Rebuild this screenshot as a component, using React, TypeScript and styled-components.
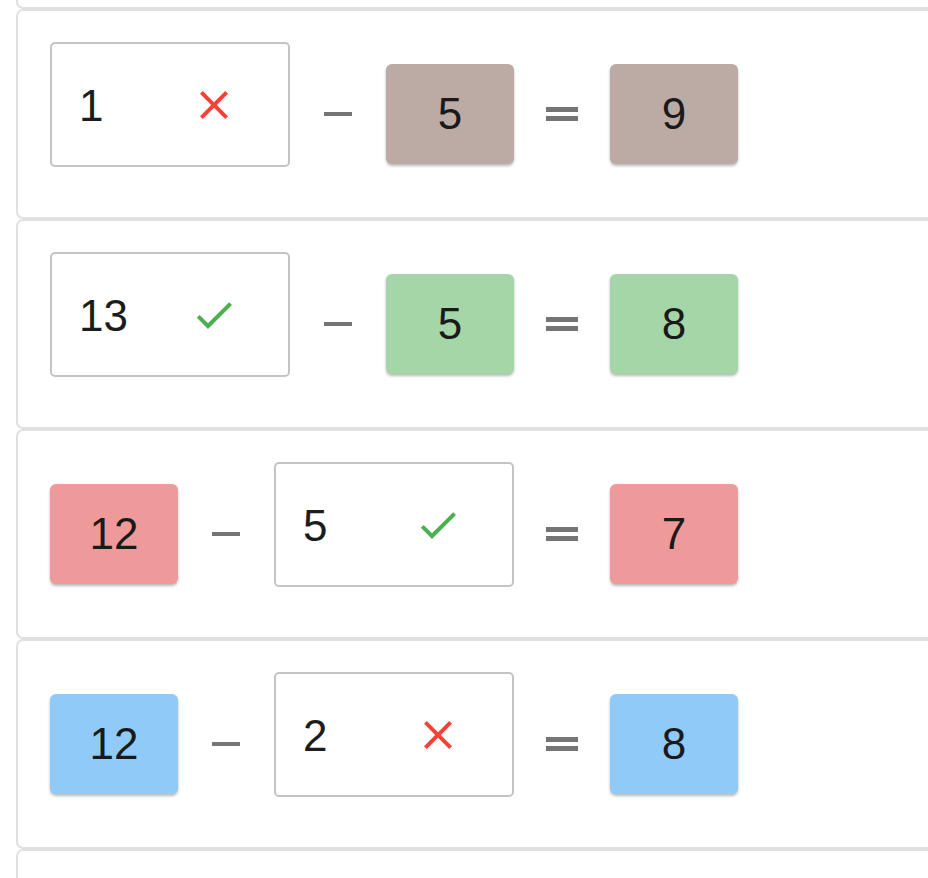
import React from "react";
import styled, { createGlobalStyle } from "styled-components";

const Global = createGlobalStyle`
  html, body {
    margin: 0;
    padding: 0;
    background: #ffffff;
    overflow: hidden;
    font-family: "Liberation Sans", Arial, sans-serif;
  }
`;

const List = styled.div`
  margin-top: -201px;
  margin-left: 16px;
  width: 960px;
  display: flex;
  flex-direction: column;
`;

const Card = styled.div`
  box-sizing: border-box;
  height: 210px;
  border: 2px solid #e0e0e0;
  border-radius: 7px;
  background: #fff;
  display: flex;
  align-items: center;
  padding-left: 32px;
`;

const Field = styled.div`
  box-sizing: border-box;
  width: 240px;
  height: 125px;
  margin-bottom: 19px;
  border: 2px solid #c4c4c4;
  border-radius: 5px;
  padding: 0 24px 0 27px;
  display: flex;
  align-items: center;
`;

const FieldText = styled.span`
  width: 111px;
  font-size: 44px;
  line-height: 1;
  padding-top: 3px;
  color: #1c1c1c;
`;

const NumberBox = styled.div<{ $bg: string }>`
  width: 128px;
  height: 100px;
  border-radius: 6px;
  background: ${(p) => p.$bg};
  box-shadow: 0 2px 3px rgba(0, 0, 0, 0.28);
  display: flex;
  align-items: center;
  justify-content: center;
  font-size: 44px;
  color: #1a1a1a;
`;

const OpSlot = styled.div`
  width: 96px;
  display: flex;
  align-items: center;
  justify-content: center;
`;

const Minus = styled.span`
  width: 28px;
  height: 4px;
  background: #757575;
`;

const Equals = styled.span`
  width: 32px;
  height: 14px;
  box-sizing: border-box;
  border-top: 5px solid #757575;
  border-bottom: 5px solid #757575;
`;

const CloseIcon = () => (
  <svg width="48" height="48" viewBox="0 0 24 24" fill="#f44336">
    <path d="M19 6.41 17.59 5 12 10.59 6.41 5 5 6.41 10.59 12 5 17.59 6.41 19 12 13.41 17.59 19 19 17.59 13.41 12z" />
  </svg>
);

const CheckIcon = () => (
  <svg width="48" height="48" viewBox="0 0 24 24" fill="#4caf50">
    <path d="M9 16.17 4.83 12l-1.42 1.41L9 19 21 7l-1.41-1.41z" />
  </svg>
);

type Slot =
  | { kind: "input"; value: string; ok: boolean }
  | { kind: "box"; value: string };

type Row = { color: string; a: Slot; b: Slot; c: Slot } | null;

const rows: Row[] = [
  null,
  {
    color: "#bcaaa4",
    a: { kind: "input", value: "1", ok: false },
    b: { kind: "box", value: "5" },
    c: { kind: "box", value: "9" },
  },
  {
    color: "#a5d6a7",
    a: { kind: "input", value: "13", ok: true },
    b: { kind: "box", value: "5" },
    c: { kind: "box", value: "8" },
  },
  {
    color: "#ef9a9a",
    a: { kind: "box", value: "12" },
    b: { kind: "input", value: "5", ok: true },
    c: { kind: "box", value: "7" },
  },
  {
    color: "#90caf9",
    a: { kind: "box", value: "12" },
    b: { kind: "input", value: "2", ok: false },
    c: { kind: "box", value: "8" },
  },
  null,
];

const renderSlot = (s: Slot, color: string) =>
  s.kind === "input" ? (
    <Field>
      <FieldText>{s.value}</FieldText>
      {s.ok ? <CheckIcon /> : <CloseIcon />}
    </Field>
  ) : (
    <NumberBox $bg={color}>{s.value}</NumberBox>
  );

export default function App() {
  return (
    <>
      <Global />
      <List>
        {rows.map((r, i) => (
          <Card key={i}>
            {r && (
              <>
                {renderSlot(r.a, r.color)}
                <OpSlot>
                  <Minus />
                </OpSlot>
                {renderSlot(r.b, r.color)}
                <OpSlot>
                  <Equals />
                </OpSlot>
                {renderSlot(r.c, r.color)}
              </>
            )}
          </Card>
        ))}
      </List>
    </>
  );
}
